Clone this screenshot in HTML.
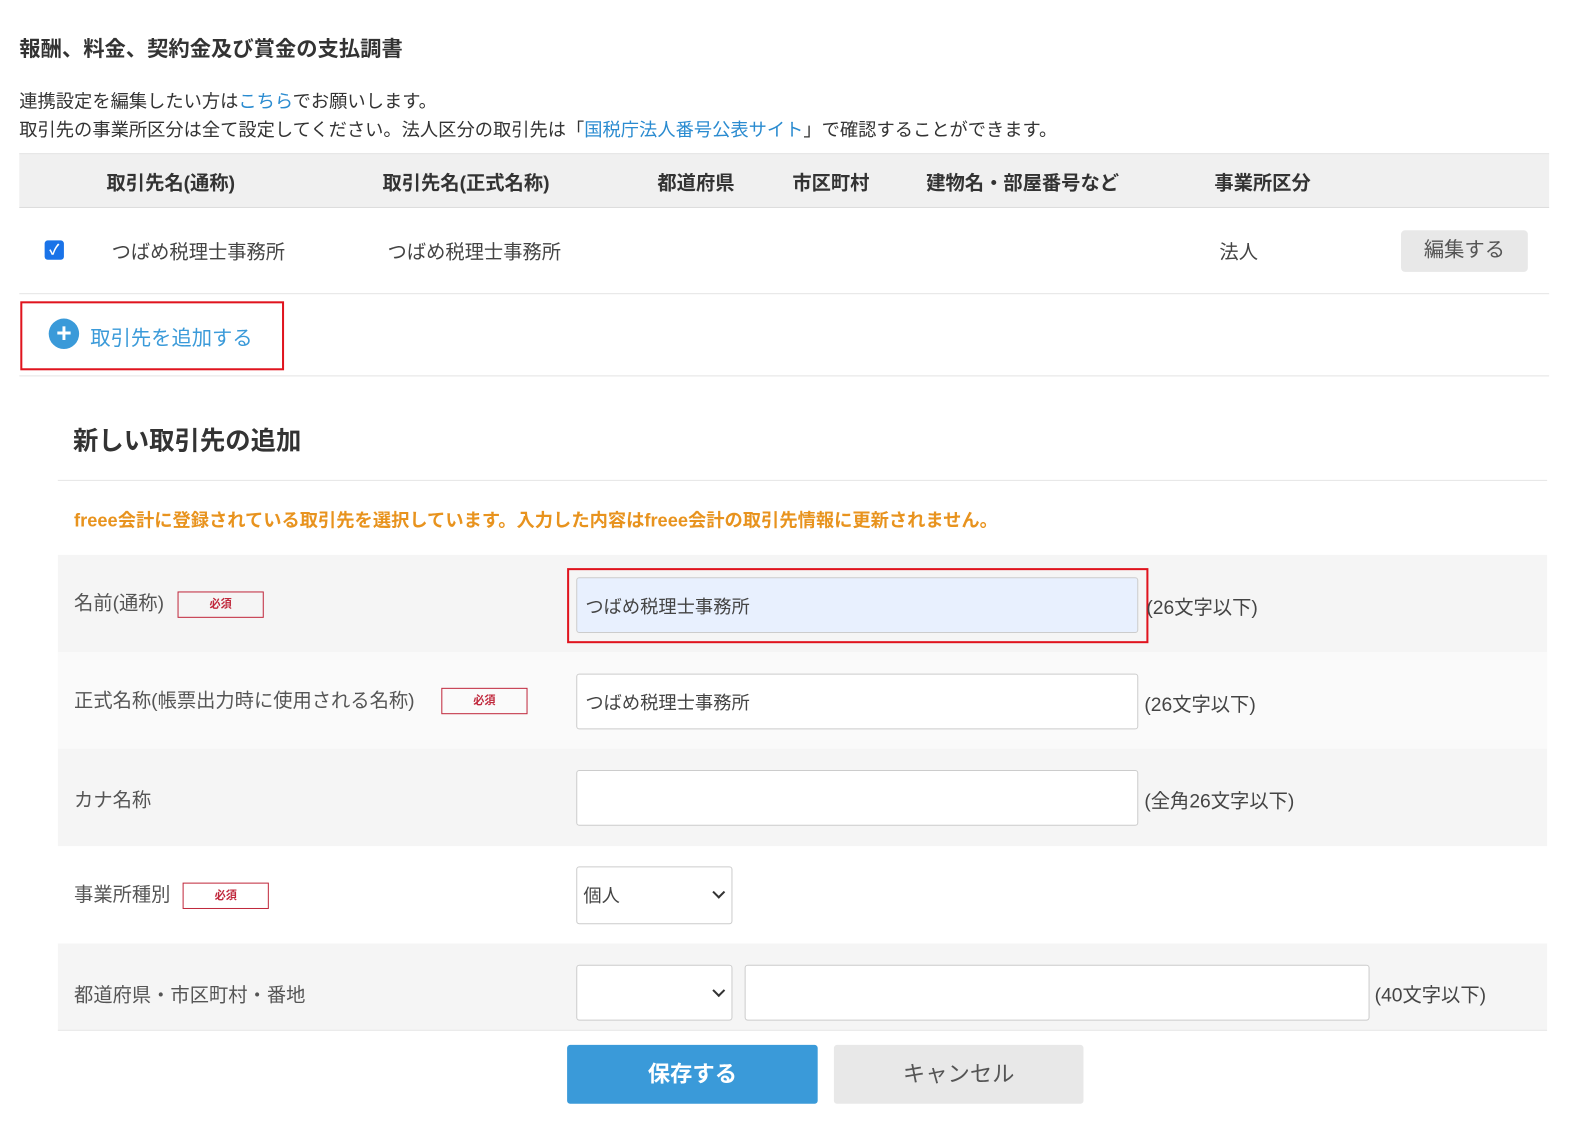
<!DOCTYPE html>
<html><head><meta charset="utf-8"><style>
*{box-sizing:border-box;margin:0;padding:0}
body{width:1590px;height:1136px;background:#fff;font-family:"Liberation Sans","Noto Sans CJK JP",sans-serif;color:#333;position:relative;overflow:hidden}
#w{position:absolute;left:0;top:0;width:1568px;height:1120px;transform:scale(1.0145);transform-origin:0 0}
.a{position:absolute;white-space:nowrap}
.b{font-weight:bold}
a{color:#2a8bd0;text-decoration:none}
.inp{position:absolute;background:#fff;border:1px solid #ccc;border-radius:3px;height:55px;font-size:18px;padding:14px 8px;color:#444}
.req{position:absolute;border:1px solid #c0283c;color:#c0283c;font-size:11px;font-weight:bold;text-align:center;width:85px;height:26px;line-height:24px}
.row{position:absolute;left:57px;width:1468px}
.lbl{font-size:19px;color:#555}
.chev{position:absolute;right:8px;top:20px;width:9px;height:9px;border-right:2px solid #333;border-bottom:2px solid #333;transform:rotate(45deg)}
</style></head><body><div id="w">
<div class="a b" style="left:19px;top:32px;font-size:21px;color:#333">報酬、料金、契約金及び賞金の支払調書</div>
<div class="a" style="left:19px;top:86px;font-size:18px">連携設定を編集したい方は<a>こちら</a>でお願いします。</div>
<div class="a" style="left:19px;top:114px;font-size:18px">取引先の事業所区分は全て設定してください。法人区分の取引先は「<a>国税庁法人番号公表サイト</a>」で確認することができます。</div>

<div class="a" style="left:19px;top:151px;width:1508px;height:54px;background:#f0f0f0;border-top:1px solid #e4e4e4;border-bottom:1px solid #ddd"></div>
<div class="a b" style="left:105px;top:166px;font-size:19px">取引先名(通称)</div>
<div class="a b" style="left:377px;top:166px;font-size:19px">取引先名(正式名称)</div>
<div class="a b" style="left:648px;top:166px;font-size:19px">都道府県</div>
<div class="a b" style="left:781px;top:166px;font-size:19px">市区町村</div>
<div class="a b" style="left:913px;top:166px;font-size:19px">建物名・部屋番号など</div>
<div class="a b" style="left:1197px;top:166px;font-size:19px">事業所区分</div>

<div class="a" style="left:44px;top:237px;width:19px;height:19px;background:#1a73e8;border-radius:3px;color:#fff;font-size:14px;text-align:center;line-height:19px;font-weight:bold">✓</div>
<div class="a" style="left:110px;top:234px;font-size:19px;color:#444">つばめ税理士事務所</div>
<div class="a" style="left:382px;top:234px;font-size:19px;color:#444">つばめ税理士事務所</div>
<div class="a" style="left:1202px;top:234px;font-size:19px;color:#444">法人</div>
<div class="a" style="left:1381px;top:227px;width:125px;height:41px;background:#e8e8e8;border-radius:4px;font-size:20px;color:#555;text-align:center;line-height:40px">編集する</div>
<div class="a" style="left:19px;top:289px;width:1508px;height:1px;background:#e4e4e4"></div>

<div class="a" style="left:20px;top:297px;width:260px;height:68px;border:2px solid #e0141e"></div>
<div class="a" style="left:48px;top:314px;width:30px;height:30px;border-radius:50%;background:#3a9ad9;color:#fff;font-size:26px;font-weight:bold;text-align:center;line-height:29px">+</div>
<div class="a" style="left:89px;top:317px;font-size:20px;color:#3a9ad9">取引先を追加する</div>
<div class="a" style="left:19px;top:370px;width:1508px;height:1px;background:#e4e4e4"></div>

<div class="a b" style="left:72px;top:415px;font-size:25px;color:#333">新しい取引先の追加</div>
<div class="a" style="left:57px;top:473px;width:1468px;height:1px;background:#e4e4e4"></div>
<div class="a b" style="left:73px;top:499px;font-size:18px;color:#e8931e">freee会計に登録されている取引先を選択しています。入力した内容はfreee会計の取引先情報に更新されません。</div>

<div class="row" style="top:547px;height:96px;background:#f5f5f5"></div>
<div class="row" style="top:643px;height:95px;background:#fafafa"></div>
<div class="row" style="top:738px;height:96px;background:#f5f5f5"></div>
<div class="row" style="top:834px;height:96px;background:#fff"></div>
<div class="row" style="top:930px;height:85px;background:#f5f5f5"></div>
<div class="row" style="top:1015px;height:1px;background:#e4e4e4"></div>

<div class="a lbl" style="left:73px;top:580px">名前(通称)</div>
<div class="req" style="left:175px;top:583px">必須</div>
<div class="inp" style="left:568px;top:569px;width:554px;background:#e8f0fe">つばめ税理士事務所</div>
<div class="a" style="left:559px;top:560px;width:573px;height:74px;border:2px solid #e0141e"></div>
<div class="a lbl" style="left:1130px;top:584px;color:#444">(26文字以下)</div>

<div class="a lbl" style="left:73px;top:676px">正式名称(帳票出力時に使用される名称)</div>
<div class="req" style="left:435px;top:678px">必須</div>
<div class="inp" style="left:568px;top:664px;width:554px">つばめ税理士事務所</div>
<div class="a lbl" style="left:1128px;top:680px;color:#444">(26文字以下)</div>

<div class="a lbl" style="left:73px;top:774px">カナ名称</div>
<div class="inp" style="left:568px;top:759px;width:554px"></div>
<div class="a lbl" style="left:1128px;top:775px;color:#444">(全角26文字以下)</div>

<div class="a lbl" style="left:73px;top:867px">事業所種別</div>
<div class="req" style="left:180px;top:870px">必須</div>
<div class="inp" style="left:568px;top:854px;width:154px;height:57px;padding:14px 6px">個人<span class="chev"></span></div>

<div class="a lbl" style="left:73px;top:966px">都道府県・市区町村・番地</div>
<div class="inp" style="left:568px;top:951px;width:154px"><span class="chev"></span></div>
<div class="inp" style="left:734px;top:951px;width:616px"></div>
<div class="a lbl" style="left:1355px;top:966px;color:#444">(40文字以下)</div>

<div class="a b" style="left:559px;top:1030px;width:247px;height:58px;background:#3a9ad9;border-radius:3px;color:#fff;font-size:22px;text-align:center;line-height:57px">保存する</div>
<div class="a" style="left:822px;top:1030px;width:246px;height:58px;background:#e8e8e8;border-radius:3px;color:#555;font-size:22px;text-align:center;line-height:57px">キャンセル</div>
</div></body></html>
